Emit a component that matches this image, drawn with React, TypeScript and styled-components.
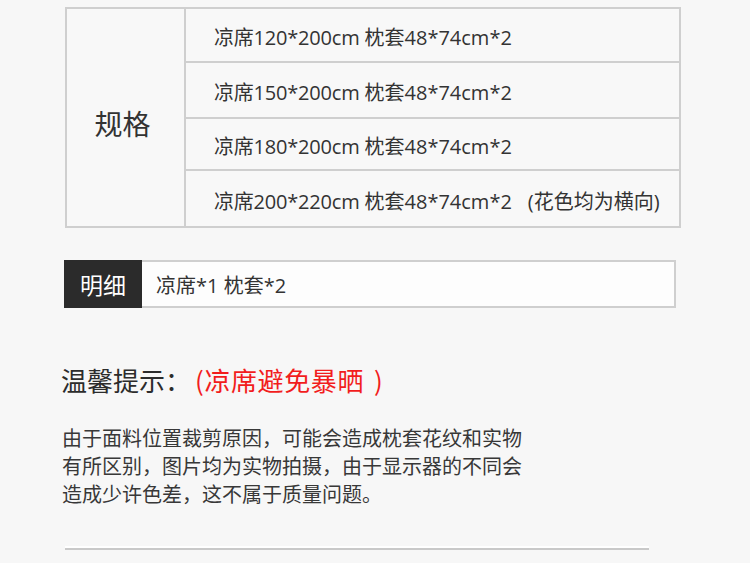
import React from "react";
import styled, { createGlobalStyle } from "styled-components";

const Global = createGlobalStyle`
  html, body { margin: 0; padding: 0; background: #f7f7f7; }
  body { font-family: "Open Sans", "Noto Sans CJK SC", sans-serif; color: #333; }
`;

const Page = styled.div`
  width: 750px;
  height: 563px;
  overflow: hidden;
  padding: 7px 0 0 65px;
  box-sizing: border-box;
`;

const SpecTable = styled.div`
  display: grid;
  grid-template-columns: 119px 1fr;
  grid-template-rows: 54px 56px 52px 55px;
  width: 616px;
  box-sizing: border-box;
  border: 2px solid #cfcfcf;
  background: #f8f8f8;
`;

const LabelCell = styled.div`
  grid-row: 1 / span 4;
  display: flex;
  align-items: center;
  justify-content: center;
  border-right: 2px solid #cfcfcf;
  font-size: 28px;
  color: #333;
  padding: 10px 6px 0 0;
  font-family: "Noto Sans CJK SC", sans-serif;
`;

const SpecRow = styled.div<{ $last?: boolean }>`
  display: flex;
  align-items: center;
  padding: 3px 0 0 28px;
  font-size: 20px;
  color: #333;
  border-bottom: ${(p) => (p.$last ? "none" : "2px solid #cfcfcf")};
  white-space: nowrap;
`;

const Size = styled.span`
  margin-right: 5px;
  letter-spacing: -0.2px;
`;

const Note = styled.span`
  margin-left: 16px;
`;

const DetailBox = styled.div`
  display: flex;
  margin: 32px 0 0 -1px;
  width: 612px;
  height: 48px;
  box-sizing: border-box;
  border: 2px solid #cfcfcf;
  border-left: none;
  background: #fdfdfd;
`;

const DetailLabel = styled.div`
  width: 78px;
  margin-top: -2px;
  margin-bottom: -2px;
  background: #2b2b2b;
  color: #fff;
  display: flex;
  align-items: center;
  justify-content: center;
  font-size: 23px;
  font-family: "Noto Sans CJK SC", sans-serif;
`;

const DetailText = styled.div`
  display: flex;
  align-items: center;
  padding-left: 14px;
  font-size: 20px;
  color: #333;
`;

const Heading = styled.h2`
  margin: 54px 0 0 -4px;
  font-weight: normal;
  font-size: 26px;
  line-height: 36px;
  color: #2c2c2c;
  font-family: "Noto Sans CJK SC", sans-serif;
`;

const Red = styled.span`
  color: #f21d1d;
  margin-left: 4px;
  letter-spacing: 0.6px;
`;

const CloseParen = styled.span`
  margin-left: 10px;
`;

const Tips = styled.p`
  margin: 26px 0 0 -3px;
  font-size: 20px;
  line-height: 28px;
  color: #383838;
  font-family: "Noto Sans CJK SC", sans-serif;
`;

const Rule = styled.div`
  margin: 38px 0 0 0;
  width: 584px;
  height: 0;
  border-top: 2px solid #ffffff;
  border-bottom: 2px solid #c9c9c9;
`;

const specs = [
  ["凉席120*200cm", "枕套48*74cm*2"],
  ["凉席150*200cm", "枕套48*74cm*2"],
  ["凉席180*200cm", "枕套48*74cm*2"],
  ["凉席200*220cm", "枕套48*74cm*2"],
];

export default function App() {
  return (
    <>
      <Global />
      <Page>
        <SpecTable>
          <LabelCell>规格</LabelCell>
          {specs.map(([a, b], i) => (
            <SpecRow key={a} $last={i === specs.length - 1}>
              <Size>{a}</Size>
              {b}
              {i === specs.length - 1 && <Note>(花色均为横向)</Note>}
            </SpecRow>
          ))}
        </SpecTable>
        <DetailBox>
          <DetailLabel>明细</DetailLabel>
          <DetailText>凉席*1 枕套*2</DetailText>
        </DetailBox>
        <Heading>
          温馨提示：
          <Red>
            (凉席避免暴晒<CloseParen>)</CloseParen>
          </Red>
        </Heading>
        <Tips>
          由于面料位置裁剪原因，可能会造成枕套花纹和实物
          <br />
          有所区别，图片均为实物拍摄，由于显示器的不同会
          <br />
          造成少许色差，这不属于质量问题。
        </Tips>
        <Rule />
      </Page>
    </>
  );
}
